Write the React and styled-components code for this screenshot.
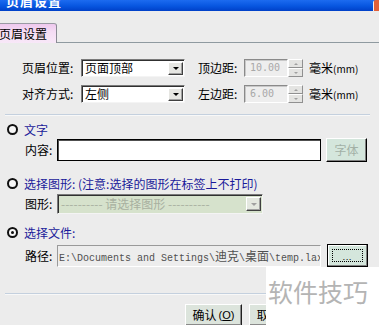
import React from 'react';
import styled, { createGlobalStyle } from 'styled-components';

const Global = createGlobalStyle`
  html, body { margin: 0; padding: 0; }
  body {
    width: 379px; height: 325px; overflow: hidden; background: #ECECEC;
    font-family: "Noto Sans CJK SC", "Liberation Sans", sans-serif;
    font-size: 12px; color: #000;
  }
`;

const Window = styled.div`
  position: relative;
  width: 379px;
  height: 325px;
  overflow: hidden;
  background: #ECECEC;
  display: flex;
  flex-direction: column;
`;

const TitleBar = styled.div`
  flex: none;
  height: 11px;
  overflow: hidden;
  display: flex;
  align-items: flex-start;
  background: linear-gradient(#1C6BF0, #0756E0 55%, #0040C8);
`;

const TitleText = styled.span`
  color: #fff;
  font-weight: bold;
  font-size: 13px;
  line-height: 13px;
  margin: -6px 0 0 6px;
  letter-spacing: 1px;
`;

const CloseCorner = styled.span`
  margin-left: auto;
  width: 6px;
  height: 11px;
  background: linear-gradient(90deg, #F4F0F0 0 1px, #E0603A 1px);
  border-radius: 3px 0 0 0;
`;

const TabStrip = styled.div`
  flex: none;
  height: 32px;
  display: flex;
  align-items: flex-end;
`;

const Tab = styled.div`
  width: 56px;
  height: 19px;
  border-top: 1px solid #9A9AA4;
  border-right: 1px solid #8A8A94;
  border-radius: 0 3px 0 0;
  background: linear-gradient(#EEC8EE, #F4DCF4 40%, #F8E8F8);
  line-height: 19px;
  text-indent: -1px;
  white-space: nowrap;
  overflow: hidden;
`;

const TabFiller = styled.div`
  flex: 1;
  height: 1px;
  background: #8F9AA0;
`;

const Panel = styled.div`
  flex: 1;
  display: flex;
  flex-direction: column;
  padding-top: 16px;
`;

const FieldRow = styled.div`
  display: flex;
  align-items: center;
  height: 18px;
  padding-left: 22px;
  margin-top: ${p => p.$mt || 0}px;
`;

const Label = styled.span`
  flex: none;
  width: ${p => p.$w}px;
  margin-left: ${p => p.$ml || 0}px;
  white-space: nowrap;
  line-height: 14px;
`;

const Select = styled.div`
  flex: none;
  box-sizing: border-box;
  width: ${p => p.$w}px;
  height: ${p => p.$h || 18}px;
  display: flex;
  align-items: center;
  padding: 0 1px 0 3px;
  border-top: 1px solid #7A7A7A;
  border-left: 1px solid #7A7A7A;
  border-right: 1px solid #F4F4F4;
  border-bottom: 1px solid #F4F4F4;
  box-shadow: inset 1px 1px 0 #303030;
  background: ${p => (p.$disabled ? '#D6E2CC' : '#fff')};
  color: ${p => (p.$disabled ? '#A8B0A0' : '#000')};
  white-space: nowrap;
`;

const SelectText = styled.span`
  flex: 1;
  min-width: 0;
  line-height: 16px;
  white-space: nowrap;
`;

const DropButton = styled.span`
  flex: none;
  box-sizing: border-box;
  width: 15px;
  height: ${p => p.$h || 13}px;
  display: flex;
  align-items: center;
  justify-content: center;
  background: ${p => (p.$disabled ? '#E4E8E0' : '#E6E6E2')};
  border-top: 1px solid #fff;
  border-left: 1px solid #fff;
  border-right: 1px solid #404040;
  border-bottom: 1px solid #404040;
  box-shadow: inset -1px -1px 0 #A0A0A0;
  &::after {
    content: "";
    border-left: 3px solid transparent;
    border-right: 3px solid transparent;
    border-top: 3px solid ${p => (p.$disabled ? '#A0A0A0' : '#000')};
  }
`;

const SpinInput = styled.div`
  flex: none;
  box-sizing: border-box;
  width: 44px;
  height: 18px;
  padding-left: 5px;
  border-top: 1px solid #8A8A8A;
  border-left: 1px solid #8A8A8A;
  border-right: 1px solid #fff;
  border-bottom: 1px solid #fff;
  box-shadow: inset 1px 1px 0 #C8C8C8;
  background: #EEEEEE;
  color: #A8A8A8;
  font-family: "DejaVu Sans Mono", "Liberation Mono", monospace;
  font-size: 10px;
  line-height: 16px;
  white-space: pre;
`;

const SpinButtons = styled.div`
  flex: none;
  width: 15px;
  height: 18px;
  display: flex;
  flex-direction: column;
`;

const SpinHalf = styled.span`
  flex: 1;
  box-sizing: border-box;
  display: flex;
  align-items: center;
  justify-content: center;
  background: #E4E4E2;
  border-top: 1px solid #fff;
  border-left: 1px solid #fff;
  border-right: 1px solid #909090;
  border-bottom: 1px solid #909090;
  &::after {
    content: "";
    border-left: 2px solid transparent;
    border-right: 2px solid transparent;
    ${p => (p.$up ? 'border-bottom: 2px solid #A0A0A0;' : 'border-top: 2px solid #A0A0A0;')}
  }
`;

const Unit = styled.span`
  margin-left: 6px;
  white-space: nowrap;
  line-height: 14px;
`;

const Mm = styled.span`
  font-size: 10px;
`;

const Separator = styled.div`
  height: 1px;
  margin: ${p => p.$mt}px 9px 0 5px;
  background: #C4D0DE;
  box-shadow: 0 1px 0 #F8F8F8;
`;

const RadioRow = styled.div`
  display: flex;
  align-items: center;
  height: 14px;
  padding-left: 7px;
  margin-top: ${p => p.$mt}px;
  color: #1A1A9A;
  white-space: nowrap;
`;

const Radio = styled.span`
  flex: none;
  box-sizing: border-box;
  width: 11px;
  height: 11px;
  border-radius: 50%;
  border: 2px solid #101010;
  background: #F6F6F6;
  margin-right: 6px;
  display: flex;
  align-items: center;
  justify-content: center;
  &::after {
    content: "";
    width: 3px;
    height: 3px;
    border-radius: 50%;
    background: ${p => (p.$checked ? '#101010' : 'transparent')};
  }
`;

const EntryRow = styled.div`
  display: flex;
  align-items: center;
  height: ${p => p.$h}px;
  padding-left: 25px;
  margin-top: ${p => p.$mt}px;
`;

const TextBox = styled.div`
  flex: none;
  box-sizing: border-box;
  width: 264px;
  height: ${p => p.$h}px;
  border: 1px solid #000;
  box-shadow: inset 1px 1px 0 #505050;
  background: #fff;
`;

const PathBox = styled.div`
  flex: none;
  box-sizing: border-box;
  width: 264px;
  height: 22px;
  padding-left: 1px;
  border-top: 1px solid #9A9A9A;
  border-left: 1px solid #9A9A9A;
  border-right: 1px solid #fff;
  border-bottom: 1px solid #fff;
  background: #EDEDED;
  color: #505050;
  font-family: "Liberation Mono", "DejaVu Sans Mono", "Noto Sans CJK SC", monospace;
  font-size: 10px;
  line-height: 20px;
  white-space: nowrap;
  overflow: hidden;
`;

const Wide = styled.span`
  font-family: "Noto Sans CJK SC", sans-serif;
  font-size: 12px;
`;

const SideButton = styled.div`
  flex: none;
  box-sizing: border-box;
  width: 41px;
  height: ${p => p.$h}px;
  margin-left: ${p => p.$ml}px;
  display: flex;
  align-items: center;
  justify-content: center;
  background: #D4E6DC;
  color: #A2B0A6;
  border-top: 1px solid ${p => (p.$focus ? '#000' : '#fff')};
  border-left: 1px solid ${p => (p.$focus ? '#000' : '#fff')};
  border-right: 1px solid #000;
  border-bottom: 1px solid #000;
  box-shadow: inset -1px -1px 0 #808080${p => (p.$focus ? ', inset 1px 1px 0 #fff' : '')};
  line-height: 14px;
`;

const FocusRect = styled.span`
  width: 31px;
  height: 13px;
  box-sizing: border-box;
  border: 1px dotted #000;
  display: flex;
  align-items: flex-end;
  justify-content: center;
  font-size: 8px;
  line-height: 8px;
  color: #000;
  letter-spacing: 1px;
`;

const ButtonBar = styled.div`
  display: flex;
  justify-content: flex-end;
  gap: 7px;
  padding-right: 73px;
  margin-top: 10px;
`;

const DialogButton = styled.div`
  box-sizing: border-box;
  width: 57px;
  height: 22px;
  display: flex;
  align-items: center;
  justify-content: center;
  background: #DCE4DC;
  border-top: 1px solid #fff;
  border-left: 1px solid #fff;
  border-right: 1px solid #202020;
  border-bottom: 1px solid #202020;
  box-shadow: inset -1px -1px 0 #8A8A8A;
  white-space: nowrap;
  line-height: 14px;
`;

const Key = styled.span`
  font-family: "Liberation Sans", sans-serif;
  font-size: 11px;
  margin-left: 2px;
`;

const Underline = styled.span`
  text-decoration: underline;
`;

const Watermark = styled.div`
  position: absolute;
  right: 0;
  bottom: 0;
  width: 113px;
  height: 58px;
  box-sizing: border-box;
  padding: 12px 0 0 2px;
  background: #fff;
  color: #B4B4B4;
  font-size: 25px;
  line-height: 25px;
  white-space: nowrap;
`;

export default function App() {
  return (
    <Window>
      <Global />
      <TitleBar>
        <TitleText>页眉设置</TitleText>
        <CloseCorner />
      </TitleBar>
      <TabStrip>
        <Tab>页眉设置</Tab>
        <TabFiller />
      </TabStrip>
      <Panel>
        <FieldRow>
          <Label $w={59}>页眉位置:</Label>
          <Select $w={104}>
            <SelectText>页面顶部</SelectText>
            <DropButton />
          </Select>
          <Label $w={46} $ml={13}>顶边距:</Label>
          <SpinInput>10.00</SpinInput>
          <SpinButtons>
            <SpinHalf $up />
            <SpinHalf />
          </SpinButtons>
          <Unit>毫米<Mm>(mm)</Mm></Unit>
        </FieldRow>
        <FieldRow $mt={8}>
          <Label $w={59}>对齐方式:</Label>
          <Select $w={104}>
            <SelectText>左侧</SelectText>
            <DropButton />
          </Select>
          <Label $w={46} $ml={13}>左边距:</Label>
          <SpinInput>6.00</SpinInput>
          <SpinButtons>
            <SpinHalf $up />
            <SpinHalf />
          </SpinButtons>
          <Unit>毫米<Mm>(mm)</Mm></Unit>
        </FieldRow>

        <Separator $mt={11} />

        <RadioRow $mt={7}>
          <Radio />
          文字
        </RadioRow>
        <EntryRow $h={24} $mt={2}>
          <Label $w={32}>内容:</Label>
          <TextBox $h={22} />
          <SideButton $h={24} $ml={5}>字体</SideButton>
        </EntryRow>

        <RadioRow $mt={14}>
          <Radio />
          选择图形: (注意:选择的图形在标签上不打印)
        </RadioRow>
        <EntryRow $h={20} $mt={4}>
          <Label $w={32}>图形:</Label>
          <Select $w={206} $h={20} $disabled>
            <SelectText>---------- 请选择图形 ----------</SelectText>
            <DropButton $h={14} $disabled />
          </Select>
        </EntryRow>

        <RadioRow $mt={11}>
          <Radio $checked />
          选择文件:
        </RadioRow>
        <EntryRow $h={23} $mt={5}>
          <Label $w={32}>路径:</Label>
          <PathBox>
            E:\Documents and Settings\<Wide>迪克</Wide>\<Wide>桌面</Wide>\temp.lax
          </PathBox>
          <SideButton $h={23} $ml={6} $focus>
            <FocusRect>...</FocusRect>
          </SideButton>
        </EntryRow>

        <Separator $mt={26} />

        <ButtonBar>
          <DialogButton>
            确认<Key>(<Underline>O</Underline>)</Key>
          </DialogButton>
          <DialogButton>
            取消<Key>(<Underline>C</Underline>)</Key>
          </DialogButton>
        </ButtonBar>
      </Panel>
      <Watermark>软件技巧</Watermark>
    </Window>
  );
}
